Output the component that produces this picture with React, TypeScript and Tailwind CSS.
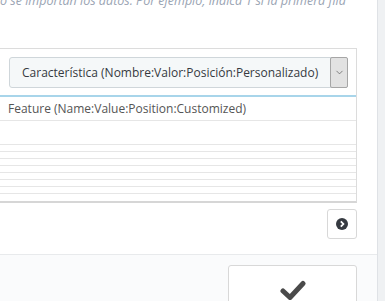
import { ChevronDown } from "lucide-react";

const thinRows = Array.from({ length: 8 });

export default function App() {
  return (
    <div className="flex h-[301px] w-[385px] overflow-hidden bg-white font-['Open_Sans',sans-serif] text-[12px] text-[#555]">
      <div className="flex w-[377px] flex-col overflow-hidden">
        {/* help text cut off at the top */}
        <p className="-mt-[8px] h-[18px] whitespace-nowrap text-[12.5px] italic leading-[18px] text-[#9aa4b3]">
          o se importan los datos. Por ejemplo, indica 1 si la primera fila
        </p>

        <div className="mt-[38px] -ml-px w-[358px] border border-b-2 border-[#dcdcdc] border-b-[#d6d6d6]">
          <div className="flex h-[48px] items-center border-b-2 border-[#a8d5ea] pl-[9px]">
            <div className="flex h-[31px] w-[339px] items-stretch rounded-[3px] border border-[#cfd6da] bg-[#f5f8f9]">
              <span className="flex-1 whitespace-nowrap pl-[12px] text-[12px] leading-[29px] text-[#363a41]">
                Característica (Nombre:Valor:Posición:Personalizado)
              </span>
              <span className="-my-px -mr-px flex w-[18px] items-center justify-center rounded-[2px] border border-[#a6a6a6] bg-[#e2e2e2]">
                <ChevronDown size={11} strokeWidth={1.5} className="text-[#555]" />
              </span>
            </div>
          </div>
          <div className="h-[24px] border-b border-[#e6e6e6] pl-[8px] leading-[24px]">
            Feature (Name:Value:Position:Customized)
          </div>
          <div className="h-[24px] border-b border-[#e6e6e6]" />
          {thinRows.map((_, i) => (
            <div
              key={i}
              className={`h-[7px] ${i < 7 ? "border-b border-[#e6e6e6]" : ""}`}
            />
          ))}
        </div>

        <div className="mt-[6px] flex justify-end pr-[20px]">
          <button className="flex h-[30px] w-[30px] items-center justify-center rounded-[3px] border border-[#d8d8d8] bg-white">
            <svg width="12" height="12" viewBox="0 0 12 12">
              <circle cx="6" cy="6" r="6" fill="#363a41" />
              <path d="M4.8 3.3 L7.4 6 L4.8 8.7" fill="none" stroke="#fff" strokeWidth="1.8" />
            </svg>
          </button>
        </div>

        <div className="mt-[15px] flex flex-1 justify-end border-t border-[#e8eaec] bg-[#fafbfc] pr-[20px] pt-[10px]">
          <button className="flex h-[60px] w-[129px] justify-center rounded-t-[3px] border border-[#d8d8d8] bg-white pt-[14px]">
            <svg width="26" height="20" viewBox="0 0 26 20">
              <path
                d="M3 11 L10 17.5 L23 3.5"
                fill="none"
                stroke="#4a4a4a"
                strokeWidth="5"
                strokeLinecap="round"
                strokeLinejoin="round"
              />
            </svg>
          </button>
        </div>
      </div>
      <div className="flex-1 border-l border-[#dfe2e6] bg-[#eff1f3]" />
    </div>
  );
}
